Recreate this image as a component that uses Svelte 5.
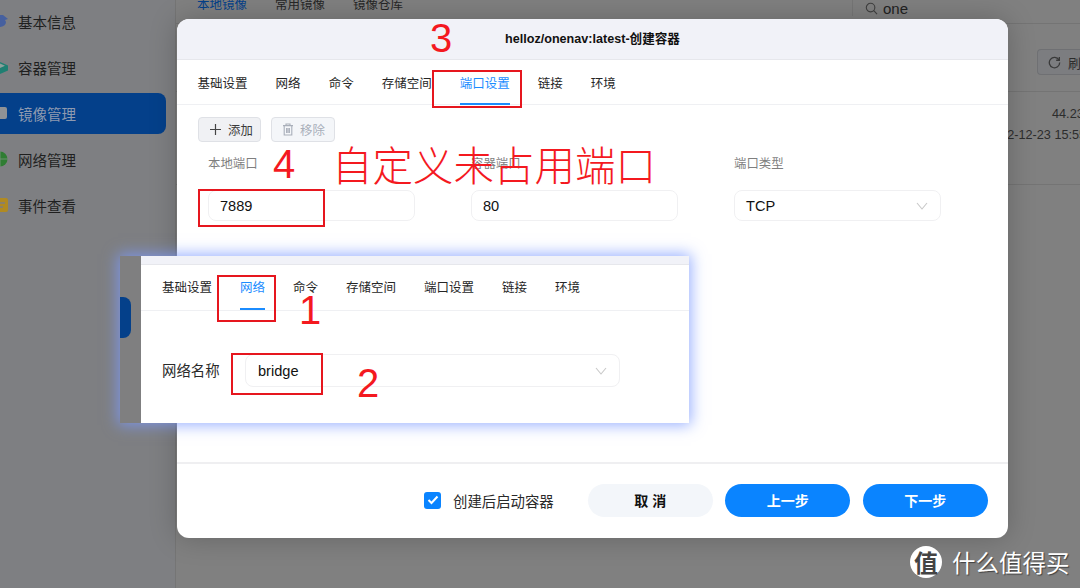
<script>
  const sideItems = [
    { label: "基本信息", icon: "info" },
    { label: "容器管理", icon: "box" },
    { label: "镜像管理", icon: "image", active: true },
    { label: "网络管理", icon: "net" },
    { label: "事件查看", icon: "event" },
  ];
  const tabs = ["基础设置", "网络", "命令", "存储空间", "端口设置", "链接", "环境"];
</script>

<div class="page">
  <aside class="sidebar">
    {#each sideItems as item}
      <div class="side-item" class:active={item.active}>
        <svg class="side-icon" width="16" height="16" viewBox="0 0 16 16">
          {#if item.icon === "info"}
            <path d="M8 2h3l5 4-3 1 1 2a6 5 0 0 1-6 5 6 5 0 0 1-6-6h6z" fill="#46609f" />
          {:else if item.icon === "box"}
            <path d="M8 3l8 3.5v5L8 15l-8-3.5v-5z" fill="#1f7f72" />
            <path d="M8 4.5l5 2.2L8 9 3 6.7z" fill="#8fa09c" />
          {:else if item.icon === "image"}
            <rect x="1" y="2" width="14" height="12" rx="2" fill="#8f9296" />
          {:else if item.icon === "net"}
            <circle cx="8" cy="8" r="7.5" fill="#2f7d33" />
            <path d="M0 8h16M8 0v16" stroke="#6f8f72" stroke-width="1" />
          {:else}
            <rect x="0" y="1" width="16" height="14" rx="2" fill="#b08a22" />
            <path d="M7 6h6M7 10h4" stroke="#7d7e81" stroke-width="1.5" />
          {/if}
        </svg>
        <span>{item.label}</span>
      </div>
    {/each}
  </aside>

  <main class="main">
    <div class="top">
      <nav class="top-tabs">
        <span class="cur">本地镜像</span>
        <span>常用镜像</span>
        <span>镜像仓库</span>
      </nav>
      <div class="search">
        <svg width="13" height="13" viewBox="0 0 14 14" fill="none" stroke="#3f3f3f" stroke-width="1.2">
          <circle cx="6" cy="6" r="4.6" />
          <path d="M9.4 9.4 13 13" />
        </svg>
        <span>one</span>
      </div>
    </div>
    <div class="toolbar">
      <div class="refresh">
        <svg width="13" height="13" viewBox="0 0 14 14" fill="none" stroke="#3a3a3a" stroke-width="1.4">
          <path d="M11.8 4.2A5.6 5.6 0 1 0 12.6 7" />
          <path d="M12.2 1.2v3.4H8.8" />
        </svg>
        <span>刷新</span>
      </div>
    </div>
    <div class="row">
      <span>44.23</span>
      <span class="date">2022-12-23 15:55</span>
    </div>
  </main>

  <section class="modal">
    <header class="modal-head">helloz/onenav:latest-创建容器</header>
    <div class="tabs modal-tabs">
      {#each tabs as t}
        <span class="tab" class:on={t === "端口设置"}>{t}</span>
      {/each}
    </div>
    <div class="modal-body">
      <div class="actions">
        <button class="act">
          <svg width="13" height="13" viewBox="0 0 13 13" stroke="#444" stroke-width="1.2"><path d="M6.5 1v11M1 6.5h11" /></svg>
          添加
        </button>
        <button class="act off">
          <svg width="12" height="13" viewBox="0 0 12 13" fill="none" stroke="#a9afba" stroke-width="1.1">
            <path d="M1 2.6h10M4 2.4V1h4v1.4M2.2 2.8v9.2h7.6V2.8M4.6 5v5M6 5v5M7.4 5v5" />
          </svg>
          移除
        </button>
      </div>
      <div class="fields">
        <div class="field">
          <span class="lab">本地端口</span>
          <div class="inp">7889</div>
        </div>
        <div class="field">
          <span class="lab">容器端口</span>
          <div class="inp">80</div>
        </div>
        <div class="field">
          <span class="lab">端口类型</span>
          <div class="inp sel">
            TCP
            <svg width="12" height="8" viewBox="0 0 12 8" fill="none" stroke="#c8c8c8" stroke-width="1.1"><path d="M1 1l5 6 5-6" /></svg>
          </div>
        </div>
      </div>
    </div>
    <footer class="modal-foot">
      <span class="check">
        <svg width="12" height="10" viewBox="0 0 12 10" fill="none" stroke="#fff" stroke-width="2"><path d="M1.5 5l3 3 6-6.5" /></svg>
      </span>
      <span class="check-label">创建后启动容器</span>
      <button class="btn ghost">取 消</button>
      <button class="btn blue">上一步</button>
      <button class="btn blue">下一步</button>
    </footer>
  </section>

  <section class="paste">
    <div class="paste-side"><span class="paste-mark"></span></div>
    <div class="paste-main">
      <div class="paste-strip"></div>
      <div class="tabs paste-tabs">
        {#each tabs as t}
          <span class="tab" class:on={t === "网络"}>{t}</span>
        {/each}
      </div>
      <div class="paste-form">
        <span class="paste-label">网络名称</span>
        <div class="inp sel paste-sel">
          bridge
          <svg width="12" height="8" viewBox="0 0 12 8" fill="none" stroke="#c8c8c8" stroke-width="1.1"><path d="M1 1l5 6 5-6" /></svg>
        </div>
      </div>
    </div>
  </section>

  <!-- annotations drawn on top of the screenshot -->
  <div class="mark b1"></div>
  <div class="mark b2"></div>
  <div class="mark b3"></div>
  <div class="mark b4"></div>
  <span class="num n1">1</span>
  <span class="num n2">2</span>
  <span class="num n3">3</span>
  <span class="num n4">4</span>
  <span class="note">自定义未占用端口</span>

  <div class="wm">
    <span class="wm-logo">值</span>
    <span class="wm-text">什么值得买</span>
  </div>
</div>

<style>
  :global(body) {
    margin: 0;
    background: #7f7f7f;
  }
  .page {
    position: relative;
    display: flex;
    width: 1080px;
    height: 588px;
    overflow: hidden;
    background: #808080;
    font-family: "Liberation Sans", "Noto Sans CJK SC", sans-serif;
    color: #1c1c1c;
  }
  .sidebar {
    width: 176px;
    flex: none;
    padding-top: 1px;
    background: #7e7f82;
    border-right: 1px solid #757575;
    box-sizing: border-box;
  }
  .side-item {
    display: flex;
    align-items: center;
    height: 41px;
    margin: 0 9px 5px 0;
    padding-left: 18px;
    position: relative;
    font-size: 14.5px;
    color: #1f1f1f;
    border-radius: 0 8px 8px 0;
  }
  .side-item.active {
    background: #04408a;
    color: #8e9ab0;
  }
  .side-icon {
    position: absolute;
    left: -8px;
    top: 12px;
  }

  .main {
    flex: 1;
    min-width: 0;
    display: flex;
    flex-direction: column;
    font-size: 12.5px;
  }
  .top {
    display: flex;
    justify-content: space-between;
    height: 23px;
    padding-left: 21px;
    border-bottom: 1px solid #747474;
  }
  .top-tabs {
    display: flex;
    gap: 28px;
    height: 12px;
    line-height: 12px;
    margin-top: -1px;
    color: #262626;
  }
  .top-tabs .cur { color: #04408a; }
  .search {
    display: flex;
    align-items: center;
    gap: 5px;
    width: 228px;
    height: 16px;
    padding-left: 12px;
    box-sizing: border-box;
    font-size: 15px;
    border-left: 1px solid #767676;
    color: #222;
  }
  .search svg { flex: none; }
  .toolbar {
    display: flex;
    justify-content: flex-end;
    padding-top: 25px;
    height: 42px;
    border-bottom: 1px solid #747474;
  }
  .refresh {
    display: flex;
    align-items: center;
    gap: 7px;
    height: 26px;
    width: 43px;
    padding-left: 10px;
    box-sizing: border-box;
    white-space: nowrap;
    overflow: hidden;
    background: #7c7d80;
    border: 1px solid #6f7073;
    border-right: 0;
    border-radius: 4px 0 0 4px;
    color: #2c2c2c;
    font-size: 13px;
  }
  .refresh svg { flex: none; }
  .row {
    display: flex;
    flex-direction: column;
    align-items: flex-start;
    gap: 7px;
    height: 93px;
    padding: 15px 0 0 876px;
    box-sizing: border-box;
    border-bottom: 1px solid #747474;
    font-size: 12.7px;
    line-height: 14px;
    color: #2c2c2c;
    white-space: nowrap;
  }
  .date { margin-left: -66px; }

  .modal {
    position: absolute;
    left: 177px;
    top: 19px;
    width: 831px;
    height: 519px;
    display: flex;
    flex-direction: column;
    background: #fff;
    border-radius: 12px;
    box-shadow: 0 0 28px rgba(0, 0, 0, 0.22);
    overflow: hidden;
  }
  .modal-head {
    height: 41px;
    flex: none;
    box-sizing: border-box;
    background: #f1f2f8;
    border-bottom: 1px solid #e6e7ec;
    text-align: center;
    line-height: 40px;
    font-size: 12.6px;
    font-weight: 700;
    color: #111;
  }
  .tabs {
    display: flex;
    flex: none;
    box-sizing: border-box;
    border-bottom: 1px solid #eff0f3;
    font-size: 12.5px;
    color: #262626;
  }
  .tab {
    position: relative;
    white-space: nowrap;
  }
  .tab.on { color: #1b8cff; }
  .tab.on::after {
    content: "";
    position: absolute;
    left: 0;
    right: 0;
    height: 2px;
    background: #1b8cff;
  }
  .modal-tabs {
    gap: 28px;
    height: 45px;
    padding: 13px 0 0 20.6px;
  }
  .modal-tabs .tab.on::after { bottom: -1px; }
  .modal-body {
    flex: 1;
    min-height: 0;
    padding: 12px 0 0 21px;
    border-bottom: 2px solid #efeff1;
  }
  .actions {
    display: flex;
    gap: 10px;
  }
  .act {
    display: flex;
    align-items: center;
    gap: 6px;
    width: 63px;
    height: 25px;
    padding: 0 0 0 10px;
    box-sizing: border-box;
    background: #f0f1f4;
    border: 1px solid #dfe1e6;
    border-radius: 4px;
    font: inherit;
    font-size: 12.4px;
    color: #3a3a3a;
  }
  .act svg { flex: none; }
  .act.off {
    width: 64px;
    background: #f4f6f9;
    color: #a9afba;
  }
  .fields {
    display: flex;
    gap: 56px;
    margin-top: 14px;
    padding-left: 10px;
  }
  .field {
    display: flex;
    flex-direction: column;
    width: 207px;
  }
  .lab {
    height: 34px;
    font-size: 12.4px;
    line-height: 16px;
    color: #7f7f7f;
  }
  .inp {
    display: flex;
    align-items: center;
    justify-content: space-between;
    height: 31px;
    padding: 0 12px 0 11px;
    box-sizing: border-box;
    border: 1px solid #f0f0f2;
    border-radius: 8px;
    font-size: 14.6px;
    color: #111;
  }
  .modal-foot {
    display: flex;
    align-items: center;
    height: 74px;
    flex: none;
    box-sizing: border-box;
    padding: 0 20px 2px 247px;
  }
  .check {
    display: flex;
    align-items: center;
    justify-content: center;
    width: 17px;
    height: 17px;
    border-radius: 3px;
    background: #0a84ff;
  }
  .check-label {
    margin: 0 34px 0 12px;
    font-size: 14.4px;
    color: #2a2a2a;
    white-space: nowrap;
  }
  .btn {
    width: 125px;
    height: 33px;
    margin-right: 12.5px;
    border: 0;
    border-radius: 17px;
    padding: 0;
    font: inherit;
    font-size: 14px;
    font-weight: 700;
  }
  .btn:last-child { margin-right: 0; }
  .ghost { background: #f3f6fa; color: #111; }
  .blue { background: #0a84ff; color: #fff; }

  .paste {
    position: absolute;
    left: 120px;
    top: 256px;
    width: 569px;
    height: 167px;
    display: flex;
    box-shadow: 0 0 14px 2px rgba(125, 155, 255, 0.8);
  }
  .paste-side {
    width: 21px;
    flex: none;
    background: #7f7f80;
  }
  .paste-mark {
    display: block;
    width: 11px;
    height: 41px;
    margin-top: 41px;
    background: #04408a;
    border-radius: 0 8px 8px 0;
  }
  .paste-main {
    flex: 1;
    min-width: 0;
    background: #fff;
    display: flex;
    flex-direction: column;
  }
  .paste-strip {
    height: 8px;
    flex: none;
    background: #f1f2f8;
    border-bottom: 1px solid #e6e7ec;
  }
  .paste-tabs {
    gap: 28px;
    height: 46px;
    padding: 12px 0 0 21px;
  }
  .paste-tabs .tab.on::after { bottom: 0; }
  .paste-form {
    display: flex;
    align-items: center;
    padding: 43px 0 0 21px;
  }
  .paste-label {
    width: 83px;
    margin-top: -2px;
    font-size: 14.4px;
    color: #2a2a2a;
    white-space: nowrap;
  }
  .paste-sel {
    width: 375px;
    height: 33px;
    padding-left: 12px;
  }

  .mark {
    position: absolute;
    box-sizing: border-box;
    border: 2px solid #e6161e;
  }
  .b1 { left: 217px; top: 275px; width: 59px; height: 47px; }
  .b2 { left: 231px; top: 353px; width: 92px; height: 42px; }
  .b3 { left: 432px; top: 70px; width: 90px; height: 38px; }
  .b4 { left: 198px; top: 189px; width: 127px; height: 38px; }
  .num {
    position: absolute;
    font-family: "Liberation Sans", sans-serif;
    font-size: 40px;
    line-height: 40px;
    color: #f4191f;
  }
  .n1 { left: 299px; top: 290px; }
  .n2 { left: 357px; top: 363px; }
  .n3 { left: 430px; top: 18px; }
  .n4 { left: 273px; top: 144px; }
  .note {
    position: absolute;
    left: 332px;
    top: 141px;
    font-family: "Noto Sans CJK SC", sans-serif;
    font-size: 40.5px;
    font-weight: 300;
    line-height: 46px;
    color: #f4191f;
    white-space: nowrap;
  }

  .wm {
    position: absolute;
    left: 910px;
    top: 546px;
    display: flex;
    align-items: center;
    gap: 10px;
  }
  .wm-logo {
    width: 32px;
    height: 32px;
    border-radius: 50%;
    background: #fff;
    color: #444;
    font-family: "Noto Sans CJK SC", sans-serif;
    font-size: 24px;
    font-weight: 700;
    line-height: 31px;
    text-align: center;
  }
  .wm-text {
    font-family: "Noto Sans CJK SC", sans-serif;
    font-size: 23.5px;
    line-height: 32px;
    color: #fff;
    text-shadow: 1px 1px 1px rgba(0, 0, 0, 0.5);
    white-space: nowrap;
  }
</style>
